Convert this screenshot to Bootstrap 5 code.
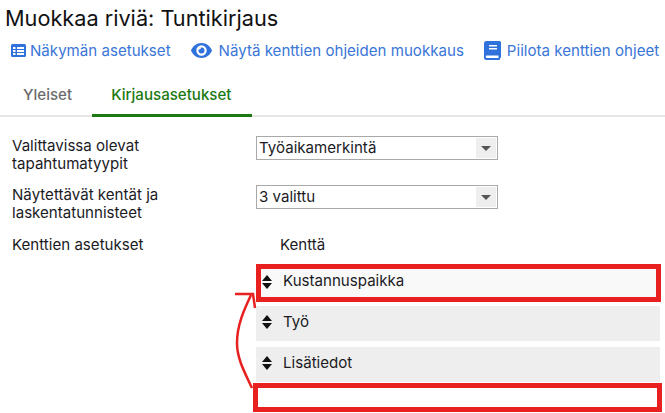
<!DOCTYPE html>
<html lang="fi">
<head>
  <meta charset="UTF-8">
  <meta name="viewport" content="width=device-width, initial-scale=1.0">
  <title>Muokkaa riviä</title>
  <link href="https://cdn.jsdelivr.net/npm/bootstrap@5.3.3/dist/css/bootstrap.min.css" rel="stylesheet">
  <style>
    html, body { height: 413px; overflow: hidden; }
    body { font-family: Inter, "Liberation Sans", sans-serif; font-size: 15.1px; color: #1b1b1f; background: #fff; position: relative; }
    .page-title { font-size: 21.7px; font-weight: 400; line-height: 26px; margin: 0; padding: 5px 0 0 5px; color: #111; }
    .action-bar { gap: 20px; padding: 3px 0 0 11px; height: 36px; }
    .action-link { color: #3a76d8; font-size: 15.1px; line-height: 20px; text-decoration: none; white-space: nowrap; gap: 4px; }
    .action-link.wide-gap { gap: 7px; }
    .action-link.mid-gap { gap: 6px; }
    .tab-bar { margin-top: 12px; height: 38px; border-bottom: 2px solid #e6e6e6; padding-left: 6px; }
    .tab-bar .nav-link { color: #6b6b6b; font-size: 15.1px; font-weight: 500; line-height: 20px; padding: 6px 17px; border-bottom: 3px solid transparent; height: 38px; }
    .tab-bar .nav-link.active { color: #1c7a12; border-bottom-color: #1c7a12; padding: 6px 20px 6px 19px; margin-left: 3px; }
    .form-area { padding: 19px 0 0 12px; }
    .form-line { display: flex; }
    .form-line .line-label { width: 244px; line-height: 17.5px; flex: none; padding-top: 1px; }
    .form-line.select-line { margin-bottom: 13px; }
    .form-line.head-line { margin-top: 14px; margin-bottom: 10px; }
    .fake-select { width: 242px; height: 24px; border: 1px solid #a9a9a9; padding-left: 2px; line-height: 22px; background: #fff; }
    .select-arrow { width: 20px; height: 20px; margin: 1px; background: #eee; }
    .select-arrow::after { content: ""; border-left: 5px solid transparent; border-right: 5px solid transparent; border-top: 5px solid #555; }
    .field-head { padding-left: 24px; line-height: 17.5px; padding-top: 1px; }
    .field-rows { margin-left: 244px; width: 404px; }
    .field-row { height: 35px; background: #eee; gap: 11px; padding: 0 0 2px 6px; margin-bottom: 6px; }
    .field-row.marked { background: #f9f9f9; border: 5px solid #e8201f; margin-bottom: 4px; height: 38px; width: 405px; padding-left: 1px; }
    .empty-slot { height: 29px; border: 5px solid #e8201f; margin: -5px 0 0 -3px; width: 409px; background: #fff; }
    .sort-icon { flex: none; width: 10px; height: 14px; display: block; }
    .arrow-note { position: absolute; left: 228px; top: 285px; pointer-events: none; }
  </style>
</head>
<body>
  <h1 class="page-title">Muokkaa riviä: Tuntikirjaus</h1>

  <div class="d-flex align-items-center action-bar">
    <a href="#" class="d-flex align-items-center action-link">
      <svg width="15" height="13" viewBox="0 0 15 13"><path fill="#2f72dc" fill-rule="evenodd" d="M1.500 0h12A1.500 1.500 0 0 1 15 1.500v10A1.500 1.500 0 0 1 13.500 13h-12A1.500 1.500 0 0 1 0 11.500v-10A1.500 1.500 0 0 1 1.500 0zM2 3v2h2.500V3zm4 0v2h7V3zM2 6v2h2.500V6zm4 0v2h7V6zM2 9v2h2.500V9zm4 0v2h7V9z"/></svg>
      Näkymän asetukset
    </a>
    <a href="#" class="d-flex align-items-center action-link wide-gap">
      <svg width="21" height="15" viewBox="0 0 21 15"><path fill="#2f72dc" fill-rule="evenodd" d="M10.500 0C15.500 0 19.500 3.500 21 7.500 19.500 11.500 15.500 15 10.500 15S1.500 11.500 0 7.500C1.500 3.500 5.500 0 10.500 0zm0 2.300a5.200 5.200 0 1 0 0 10.400 5.200 5.200 0 0 0 0-10.400zm0 2.200a3 3 0 1 1-3 3c0-.4.1-.8.2-1.100a1.500 1.500 0 0 0 2-2 3 3 0 0 1 .8.100z"/></svg>
      Näytä kenttien ohjeiden muokkaus
    </a>
    <a href="#" class="d-flex align-items-center action-link mid-gap">
      <svg width="17" height="19" viewBox="0 0 17 19"><path fill="#2f72dc" fill-rule="evenodd" d="M2.500 0h13A1.500 1.500 0 0 1 17 1.500V16a1.500 1.500 0 0 1-1 1.400v.6a1 1 0 0 1-1 1H2.500A2.500 2.500 0 0 1 0 16.500v-14A2.500 2.500 0 0 1 2.500 0zM5 4v1.500h8V4zm0 3v1.500h8V7zM3 14.500a1 1 0 0 0 0 2.500h11.500v-2.500z"/></svg>
      Piilota kenttien ohjeet
    </a>
  </div>

  <ul class="nav tab-bar">
    <li class="nav-item"><a class="nav-link" href="#">Yleiset</a></li>
    <li class="nav-item"><a class="nav-link active" href="#">Kirjausasetukset</a></li>
  </ul>

  <div class="form-area">
    <div class="form-line select-line">
      <div class="line-label">Valittavissa olevat<br>tapahtumatyypit</div>
      <div class="fake-select d-flex justify-content-between">
        <span>Työaikamerkintä</span>
        <span class="select-arrow d-flex align-items-center justify-content-center"></span>
      </div>
    </div>
    <div class="form-line">
      <div class="line-label">Näytettävät kentät ja<br>laskentatunnisteet</div>
      <div class="fake-select d-flex justify-content-between">
        <span>3 valittu</span>
        <span class="select-arrow d-flex align-items-center justify-content-center"></span>
      </div>
    </div>
    <div class="form-line head-line">
      <div class="line-label">Kenttien asetukset</div>
      <div class="field-head">Kenttä</div>
    </div>
    <div class="field-rows">
      <div class="field-row marked d-flex align-items-center">
        <svg class="sort-icon" viewBox="0 0 10 14"><path fill="#111" d="M5 0 10 6H0zM0 8h10l-5 6z"/></svg>
        <span>Kustannuspaikka</span>
      </div>
      <div class="field-row d-flex align-items-center">
        <svg class="sort-icon" viewBox="0 0 10 14"><path fill="#111" d="M5 0 10 6H0zM0 8h10l-5 6z"/></svg>
        <span>Työ</span>
      </div>
      <div class="field-row d-flex align-items-center">
        <svg class="sort-icon" viewBox="0 0 10 14"><path fill="#111" d="M5 0 10 6H0zM0 8h10l-5 6z"/></svg>
        <span>Lisätiedot</span>
      </div>
      <div class="empty-slot"></div>
    </div>
  </div>

  <svg class="arrow-note" width="32" height="110" viewBox="0 0 32 110" fill="none" stroke="#e8201f" stroke-width="2.5">
    <path d="M24 103C17 88 9 74 9 58 9 40 16 25 23 10"/>
    <path d="M7 9H25L27 23"/>
  </svg>
</body>
</html>
